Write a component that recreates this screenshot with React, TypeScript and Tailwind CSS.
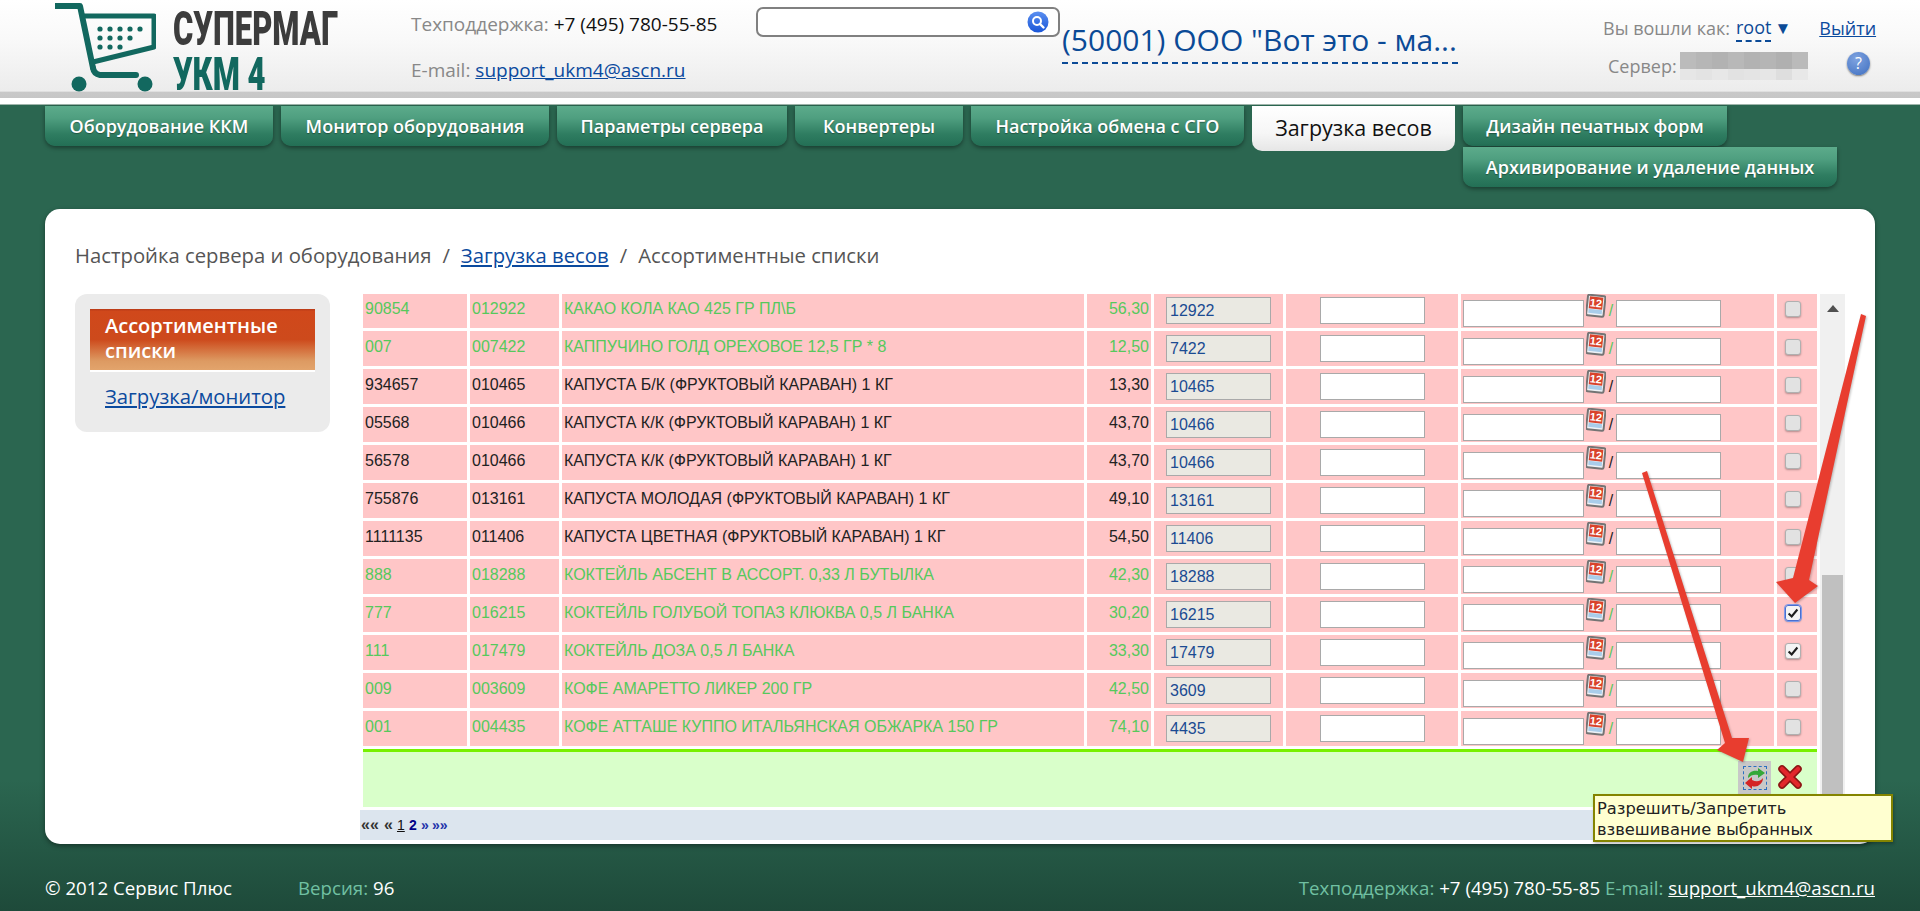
import React from "react";

const OPEN = "font-['Open_Sans',sans-serif]";

type Row = { a: string; b: string; n: string; p: string; c: string; g?: boolean; ch?: boolean; focus?: boolean };
const rows: Row[] = [
  { a: "90854", b: "012922", n: "КАКАО КОЛА КАО 425 ГР ПЛ\\Б", p: "56,30", c: "12922", g: true },
  { a: "007", b: "007422", n: "КАППУЧИНО ГОЛД ОРЕХОВОЕ 12,5 ГР * 8", p: "12,50", c: "7422", g: true },
  { a: "934657", b: "010465", n: "КАПУСТА Б/К (ФРУКТОВЫЙ КАРАВАН) 1 КГ", p: "13,30", c: "10465" },
  { a: "05568", b: "010466", n: "КАПУСТА К/К (ФРУКТОВЫЙ КАРАВАН) 1 КГ", p: "43,70", c: "10466" },
  { a: "56578", b: "010466", n: "КАПУСТА К/К (ФРУКТОВЫЙ КАРАВАН) 1 КГ", p: "43,70", c: "10466" },
  { a: "755876", b: "013161", n: "КАПУСТА МОЛОДАЯ (ФРУКТОВЫЙ КАРАВАН) 1 КГ", p: "49,10", c: "13161" },
  { a: "1111135", b: "011406", n: "КАПУСТА ЦВЕТНАЯ (ФРУКТОВЫЙ КАРАВАН) 1 КГ", p: "54,50", c: "11406" },
  { a: "888", b: "018288", n: "КОКТЕЙЛЬ АБСЕНТ В АССОРТ. 0,33 Л БУТЫЛКА", p: "42,30", c: "18288", g: true },
  { a: "777", b: "016215", n: "КОКТЕЙЛЬ ГОЛУБОЙ ТОПАЗ КЛЮКВА 0,5 Л БАНКА", p: "30,20", c: "16215", g: true, ch: true, focus: true },
  { a: "111", b: "017479", n: "КОКТЕЙЛЬ ДОЗА 0,5 Л БАНКА", p: "33,30", c: "17479", g: true, ch: true },
  { a: "009", b: "003609", n: "КОФЕ АМАРЕТТО ЛИКЕР 200 ГР", p: "42,50", c: "3609", g: true },
  { a: "001", b: "004435", n: "КОФЕ АТТАШЕ КУППО ИТАЛЬЯНСКАЯ ОБЖАРКА 150 ГР", p: "74,10", c: "4435", g: true },
];

function Tab({ label, w }: { label: string; w: string }) {
  return (
    <div
      className={`${w} h-[40px] flex items-center justify-center whitespace-nowrap rounded-b-[10px] bg-[linear-gradient(#5cab8b,#4f9f80_30%,#2f7d61_70%,#236f55)] shadow-[0_2px_4px_rgba(0,0,0,0.4)] text-white text-[18px] font-semibold [text-shadow:0_1px_1px_rgba(0,0,0,0.35)]`}
    >
      {label}
    </div>
  );
}

function CalIcon() {
  return (
    <svg width="20" height="24" viewBox="0 0 20 24" className="shrink-0">
      <g transform="rotate(6 10 12)">
        <rect x="1" y="1.5" width="17.5" height="20.5" rx="1.5" fill="#eef2f6" stroke="#747474" strokeWidth="2" />
        <rect x="3" y="3" width="13.5" height="12" fill="#d9432b" />
        <rect x="3" y="15.5" width="13.5" height="4" fill="#a9cdea" />
        <text x="9.7" y="13" fontSize="11" fontWeight="700" fill="#fff" textAnchor="middle" fontFamily="Liberation Sans, sans-serif">12</text>
      </g>
    </svg>
  );
}

function Check({ on, focus }: { on?: boolean; focus?: boolean }) {
  return (
    <span
      className={`relative block w-[16px] h-[16px] rounded-[3px] shadow-[0_1px_2px_rgba(0,0,0,0.3)] ${on ? "bg-[#f4f4f4]" : "bg-[#e2e2e2]"} border ${focus ? "border-[#4a6fd0] outline outline-1 outline-[#7f9ae8]" : "border-[#b0b0b0]"}`}
    >
      {on && (
        <svg viewBox="0 0 16 16" className="absolute inset-0 w-full h-full">
          <path d="M3 8.5 L6.5 12 L13 4" fill="none" stroke="#1d1d1d" strokeWidth="2.4" />
        </svg>
      )}
    </span>
  );
}

const inputBase = "h-[27px] border-[1.5px] border-[#a9a9a9] outline-none text-[16px] text-[#1b4b92] font-['Liberation_Sans',Arial,sans-serif]";

function TableRow({ r }: { r: Row }) {
  const col = r.g ? "text-[#56c95c]" : "text-[#222222]";
  const cell = "bg-[#ffc6c7] h-[35px]";
  return (
    <div className={`grid grid-cols-[104px_89px_522px_64px_129px_172px_313px_40px] gap-[3px] ${col} text-[16px]`}>
      <div className={`${cell} pl-[2px] leading-[32px]`}>{r.a}</div>
      <div className={`${cell} pl-[2px] leading-[32px]`}>{r.b}</div>
      <div className={`${cell} pl-[2px] leading-[32px] whitespace-nowrap`}>{r.n}</div>
      <div className={`${cell} pr-[2px] text-right leading-[32px]`}>{r.p}</div>
      <div className={`${cell} pl-[12px] pt-[4px]`}>
        <input readOnly defaultValue={r.c} className={`${inputBase} w-[105px] bg-[#eae9e2] pl-[3px]`} />
      </div>
      <div className={`${cell} flex justify-center pt-[4px]`}>
        <input readOnly className={`${inputBase} w-[105px] bg-white`} />
      </div>
      <div className={`${cell} flex items-start pl-[2px]`}>
        <input readOnly className={`${inputBase} w-[121px] mt-[7px] bg-white`} />
        <span className="ml-[2px] mt-[1px]"><CalIcon /></span>
        <span className="w-[10px] mt-[9px] text-center leading-[18px]">/</span>
        <input readOnly className={`${inputBase} w-[105px] mt-[7px] bg-white`} />
      </div>
      <div className={`${cell} pl-[8px] pt-[8px]`}>
        <Check on={r.ch} focus={r.focus} />
      </div>
    </div>
  );
}

function Logo() {
  return (
    <div className="flex items-start pl-[55px] w-[411px] shrink-0">
      <svg width="101" height="89" viewBox="55 3 101 89" className="mt-[3px] shrink-0">
        <g fill="none" stroke="#12685f" strokeLinejoin="round">
          <path d="M56 6 H80 L93 68" strokeWidth="6" strokeLinecap="round" />
          <path d="M80 16 H154 V47 L93 62" strokeWidth="5" />
          <path d="M93 68 Q94 74 100 75 H136" strokeWidth="6" strokeLinecap="round" />
        </g>
        <g fill="#12685f">
          <circle cx="79" cy="84" r="7.5" />
          <circle cx="145" cy="84" r="7.5" />
          {[100, 110, 120, 130, 140].map((x) => <circle key={x} cx={x} cy="29" r="2.6" />)}
          {[100, 110, 120, 130].map((x) => <circle key={x} cx={x} cy="38" r="2.6" />)}
          {[100, 110, 120].map((x) => <circle key={x} cx={x} cy="47" r="2.6" />)}
        </g>
      </svg>
      <div className="ml-[17px] font-['Roboto',sans-serif] font-black">
        <div className="text-[31px] leading-[22px] text-[#3c3c3c] scale-y-[1.55] origin-top mt-[12px] whitespace-nowrap">СУПЕРМАГ</div>
        <div className="text-[31px] leading-[22px] text-[#12685f] scale-y-[1.5] origin-top mt-[24px] whitespace-nowrap">УКМ 4</div>
      </div>
    </div>
  );
}

export default function App() {
  return (
    <div className={`relative w-full h-[911px] overflow-hidden ${OPEN} bg-[linear-gradient(#2b6650_0,#2b6650_780px,#1e4a3a_911px)]`}>
      {/* header */}
      <header className="h-[105px] bg-white border-b border-[#9fb5ab]">
        <div className="h-[98px] flex bg-[linear-gradient(#ffffff,#f9f9f9_40%,#ececec_93%,#c8c8c8_94%,#c6c6c6)] text-[#888888] text-[19px]">
          <Logo />
          <div className="w-[345px] shrink-0 pt-[12px]">
            <div className="leading-[24px] whitespace-nowrap">
              Техподдержка: <span className="text-[#111111]">+7 (495) 780-55-85</span>
            </div>
            <div className="leading-[24px] mt-[22px] whitespace-nowrap">
              E-mail: <a className="text-[#0b4a9e] underline">support_ukm4@ascn.ru</a>
            </div>
          </div>
          <div className="w-[304px] shrink-0 mt-[7px] h-[30px] relative bg-white border-2 border-[#808080] rounded-[7px]">
            <svg width="22" height="22" viewBox="0 0 22 22" className="absolute right-[9px] top-[2px]">
              <defs>
                <linearGradient id="sg" x1="0" y1="0" x2="0" y2="1">
                  <stop offset="0" stopColor="#5b8ff0" />
                  <stop offset="1" stopColor="#1a56d8" />
                </linearGradient>
              </defs>
              <circle cx="11" cy="11" r="10.5" fill="url(#sg)" />
              <circle cx="10" cy="10" r="4" fill="none" stroke="#fff" strokeWidth="2" />
              <path d="M13 13 L16.5 16.5" stroke="#fff" strokeWidth="2.4" strokeLinecap="round" />
            </svg>
          </div>
          <div className="ml-[2px] w-[396px] shrink-0 h-[64px] border-b-2 border-dashed border-[#0b4a96] text-[#0b4a96] text-[30px] leading-[38px] pt-[21px] box-border whitespace-nowrap overflow-hidden">
            (50001) ООО "Вот это - ма...
          </div>
          <div className="ml-[145px] shrink-0 pt-[14px] text-[18px]">
            <div className="flex items-start h-[28px] leading-[28px]">
              <span className="w-[133px] whitespace-nowrap">Вы вошли как:</span>
              <span className="text-[#0b4a96] border-b-2 border-dashed border-[#0b4a96] h-[28px] leading-[26px]">root</span>
              <span className="ml-[3px] text-[#0b4a96] text-[17px]">▼</span>
              <a className="ml-[28px] text-[#0b4a9e] underline">Выйти</a>
            </div>
            <div className="flex items-start mt-[10px] pl-[5px]">
              <span className="w-[72px] leading-[28px]">Сервер:</span>
              <svg width="128" height="28" viewBox="0 0 128 28" className="shrink-0">
                {[0, 1, 2, 3, 4, 5, 6, 7].map((i) => (
                  <g key={i}>
                    <rect x={i * 16} y="0" width="16" height="17" fill={["#bbb", "#b6b6b6", "#b2b2b2", "#b8b8b8", "#b2b2b2", "#b5b5b5", "#b0b0b0", "#bababa"][i]} />
                    <rect x={i * 16} y="17" width="16" height="11" fill={["#e6e6e6", "#e3e3e3", "#e7e7e7", "#e2e2e2", "#e4e4e4", "#e6e6e6", "#dedede", "#e8e8e8"][i]} />
                  </g>
                ))}
              </svg>
              <span className="ml-[39px] w-[23px] h-[23px] rounded-full bg-[radial-gradient(circle_at_40%_30%,#7fa3e0,#3f6fc0)] shadow-[0_1px_2px_rgba(0,0,0,0.5)] text-white text-[16px] leading-[23px] text-center">?</span>
            </div>
          </div>
        </div>
      </header>

      {/* nav */}
      <nav className="ml-[45px] mt-[1px] flex items-start gap-[8px] h-[81px]">
        <Tab label="Оборудование ККМ" w="w-[228px]" />
        <Tab label="Монитор оборудования" w="w-[268px]" />
        <Tab label="Параметры сервера" w="w-[230px]" />
        <Tab label="Конвертеры" w="w-[168px]" />
        <Tab label="Настройка обмена с СГО" w="w-[273px]" />
        <div className="w-[203px] h-[45px] flex items-center justify-center rounded-b-[10px] bg-[linear-gradient(#ffffff,#f6f6f6_60%,#e6e6e6)] text-[#111111] text-[21.5px] font-medium whitespace-nowrap">
          Загрузка весов
        </div>
        <div className="flex flex-col gap-[1px]">
          <Tab label="Дизайн печатных форм" w="w-[264px]" />
          <Tab label="Архивирование и удаление данных" w="w-[374px]" />
        </div>
      </nav>

      {/* card */}
      <main className="relative ml-[45px] mt-[22px] w-[1830px] h-[635px] bg-white rounded-[15px] shadow-[0_2px_5px_rgba(0,0,0,0.4)] px-[30px]">
        <div className="h-[85px] pt-[33px] text-[20.3px] leading-[26px] text-[#555555] whitespace-nowrap">
          Настройка сервера и оборудования<span className="mx-[11px]">/</span>
          <a className="text-[#0b4a9e] underline">Загрузка весов</a>
          <span className="mx-[11px]">/</span>Ассортиментные списки
        </div>
        <div className="flex items-start">
          <aside className="w-[255px] h-[138px] shrink-0 bg-[#ebebeb] rounded-[12px] pt-[15px] px-[15px]">
            <div className="h-[63px] border-b-2 border-white bg-[linear-gradient(#b83a18,#d0481b_4%,#cd4a1c_50%,#dd9a62_85%,#e2a46c)] pl-[15px] pt-[4px] text-white text-[20px] font-semibold leading-[25px]">
              Ассортиментные<br />списки
            </div>
            <a className="block pl-[15px] mt-[10px] text-[#0b4a9e] underline text-[20.3px] leading-[28px]">Загрузка/монитор</a>
          </aside>
          <section className="ml-[30px] w-[1485px] shrink-0 font-['Liberation_Sans',Arial,sans-serif]">
            <div className="flex h-[513px]">
              <div className="w-[1460px] shrink-0 overflow-hidden pl-[3px]">
                <div className="flex flex-col gap-[3px] -mt-px">
                  {rows.map((r) => <TableRow key={r.a} r={r} />)}
                </div>
                <div className="mt-[3px] mr-[3px] h-[58px] border-t-[3px] border-[#77f000] bg-[#d9ffca] flex justify-end items-start">
                  <button className="mt-[9px] w-[33px] h-[33px] bg-[#c8c8c8] flex items-center justify-center">
                    <span className="block w-[24px] h-[24px] border border-dashed border-[#2a6fc0]">
                      <svg viewBox="0 0 22 22" className="w-full h-full">
                        <path d="M4 11 C4 5 9 3 14 4 L14 1 L21 6 L14 11 L14 8 C10 7 7 8 4 11 Z" fill="#35a838" />
                        <path d="M19 11 C19 17 13 21 8 19 L8 22 L1 16 L8 10 L8 13 C12 15 16 15 19 11 Z" fill="#d42424" />
                      </svg>
                    </span>
                  </button>
                  <svg width="24" height="24" viewBox="0 0 24 24" className="mt-[13px] ml-[7px] mr-[15px]">
                    <path d="M4 4 L20 20 M20 4 L4 20" stroke="#8c1414" strokeWidth="7.5" strokeLinecap="round" />
                    <path d="M4 4 L20 20 M20 4 L4 20" stroke="#e2262c" strokeWidth="4.5" strokeLinecap="round" />
                  </svg>
                </div>
              </div>
              <div className="w-[25px] bg-[#f0f0f0] flex flex-col items-center">
                <svg width="12" height="7" viewBox="0 0 12 7" className="mt-[11px] shrink-0"><path d="M6 0 L12 7 H0 Z" fill="#505050" /></svg>
                <div className="mt-[263px] w-[21px] flex-1 bg-[#c0c0c0]" />
              </div>
            </div>
            <div className="mt-[3px] h-[30px] bg-[#dce5ee] flex items-center pl-[1px] text-[14px] font-bold leading-none">
              <span className="text-[#333333] w-[23px] text-[16px]">««</span>
              <span className="text-[#333333] w-[13px] text-[16px]">«</span>
              <span className="text-[#111111] underline font-normal w-[12px]">1</span>
              <span className="text-[#000088] w-[12px]">2</span>
              <span className="text-[#2233aa] w-[11px]">»</span>
              <span className="text-[#2233aa]">»»</span>
            </div>
          </section>
        </div>
        {/* tooltip */}
        <div className="absolute left-[1548px] top-[585px] w-[300px] h-[48px] bg-[#ffffd0] border-2 border-[#848400] shadow-[1px_2px_3px_rgba(0,0,0,0.25)] pl-[2px] font-['DejaVu_Sans',sans-serif] text-[16.3px] leading-[21px] text-[#222222] whitespace-nowrap pt-[2px]">
          Разрешить/Запретить<br />взвешивание выбранных
        </div>
      </main>

      {/* footer */}
      <footer className="ml-[45px] w-[1830px] mt-[31px] flex justify-between text-[18.7px] leading-[26px] text-white whitespace-nowrap">
        <div className="flex">
          <span className="w-[253px]">© 2012 Сервис Плюс</span>
          <span className="text-[#70c0a2]">Версия:&nbsp;</span>96
        </div>
        <div>
          <span className="text-[#70c0a2]">Техподдержка:</span> +7 (495) 780-55-85 <span className="text-[#70c0a2]">E-mail:</span>{" "}
          <a className="underline">support_ukm4@ascn.ru</a>
        </div>
      </footer>

      {/* annotation arrows */}
      <svg className="absolute left-0 top-0 pointer-events-none drop-shadow-[1px_1px_1px_rgba(0,0,0,0.25)]" width="1920" height="911" viewBox="0 0 1920 911">
        <polygon fill="#e83d2f" points="1861,314 1866,316 1809,580 1818,586 1795,603 1776,582 1793,578" />
        <polygon fill="#e83d2f" points="1642,473 1647,471 1732,738 1749,738 1743,762 1717,750 1725,743" />
      </svg>
    </div>
  );
}
